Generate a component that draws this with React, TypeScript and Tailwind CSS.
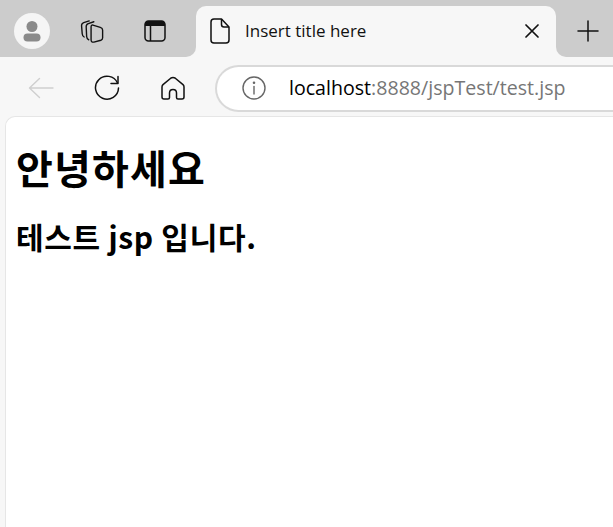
const uiFont = "font-['Open_Sans','Noto_Sans',sans-serif]";

function ProfileIcon() {
  return (
    <div className="w-9 h-9 shrink-0 rounded-full bg-[#f5f5f5] flex items-center justify-center">
      <svg width="22" height="24" viewBox="0 0 22 24" fill="#8a8a8a">
        <circle cx="11" cy="7.5" r="5.5" />
        <rect x="2.5" y="14.5" width="17" height="8" rx="4" />
      </svg>
    </div>
  );
}

function CollectionsIcon() {
  return (
    <svg className="shrink-0" width="24" height="24" viewBox="0 0 26 26" fill="none" stroke="#111111" strokeWidth="1.5" strokeLinejoin="round" strokeLinecap="round">
      <path d="M10 2 L4 4 Q1.5 5 1.7 7.5 L2.4 16 Q2.6 18.5 4.5 19.5" />
      <path d="M15 3 L9 5 Q6.6 5.8 6.7 8.5 L7.2 19 Q7.3 21.5 9.5 22.5" />
      <path d="M14 6.6 L22 9 Q24.5 9.8 24.5 12 L24.5 20.5 Q24.5 22.4 22.6 23 L15 25 Q12 25.6 12 22.6 L12 8.6 Q12 6.2 14 6.6 Z" />
    </svg>
  );
}

function TabsIcon() {
  return (
    <svg className="shrink-0" width="22" height="22" viewBox="0 0 22 22" fill="none">
      <rect x="1" y="1" width="20" height="20" rx="3.5" stroke="#111111" strokeWidth="1.5" />
      <path d="M1 4.5 Q1 1 4.5 1 L17.5 1 Q21 1 21 4.5 L21 6 L1 6 Z" fill="#111111" />
      <path d="M6.5 6 L6.5 21" stroke="#111111" strokeWidth="1.5" />
    </svg>
  );
}

function PageIcon() {
  return (
    <svg className="shrink-0" width="20" height="26" viewBox="0 0 20 26" fill="none" stroke="#111111" strokeWidth="1.5" strokeLinejoin="round">
      <path d="M4 1 L11.5 1 L19 9 L19 22 Q19 25 16 25 L4 25 Q1 25 1 22 L1 4 Q1 1 4 1 Z" />
      <path d="M11.5 1 L11.5 6.5 Q11.5 9 14 9 L19 9" />
    </svg>
  );
}

function BackIcon() {
  return (
    <svg className="shrink-0" width="26" height="22" viewBox="0 0 26 22" fill="none" stroke="#cfcfcf" strokeWidth="1.4" strokeLinecap="round" strokeLinejoin="round">
      <path d="M1.5 11 L25 11 M11.5 1.5 L1.5 11 L11.5 20.5" />
    </svg>
  );
}

function ReloadIcon() {
  return (
    <svg className="shrink-0" width="26" height="26" viewBox="0 0 26 26" fill="none" stroke="#111111" strokeWidth="1.5" strokeLinecap="round" strokeLinejoin="round">
      <path d="M23.5 8 A11.5 11.5 0 1 0 24.5 13" />
      <path d="M24 1.5 L24 8.5 L17 8.5" />
    </svg>
  );
}

function HomeIcon() {
  return (
    <svg className="shrink-0" width="24" height="24" viewBox="0 0 24 24" fill="none" stroke="#111111" strokeWidth="1.5" strokeLinejoin="round">
      <path d="M10 2 Q12 0.8 14 2 L22 8.6 Q23 9.5 23 11 L23 21 Q23 23 21 23 L17 23 Q15.5 23 15.5 21.5 L15.5 17 Q15.5 13.5 12 13.5 Q8.5 13.5 8.5 17 L8.5 21.5 Q8.5 23 7 23 L3 23 Q1 23 1 21 L1 11 Q1 9.5 2 8.6 Z" />
    </svg>
  );
}

function InfoIcon() {
  return (
    <svg className="shrink-0" width="24" height="24" viewBox="0 0 24 24" fill="none" stroke="#666666" strokeWidth="1.4" strokeLinecap="round">
      <circle cx="12" cy="12" r="11" />
      <path d="M12 10.5 L12 18" />
      <circle cx="12" cy="6.8" r="0.6" fill="#666666" />
    </svg>
  );
}

function CloseIcon() {
  return (
    <svg width="14" height="14" viewBox="0 0 14 14" stroke="#111111" strokeWidth="1.7" strokeLinecap="round">
      <path d="M1 1 L13 13 M13 1 L1 13" />
    </svg>
  );
}

function PlusIcon() {
  return (
    <svg width="22" height="22" viewBox="0 0 22 22" stroke="#111111" strokeWidth="1.5" strokeLinecap="round">
      <path d="M11 1 L11 21 M1 11 L21 11" />
    </svg>
  );
}

export default function App() {
  return (
    <div className={`w-[613px] h-[527px] overflow-hidden bg-[#f7f7f7] flex flex-col ${uiFont}`}>
      {/* Tab strip */}
      <div className="h-[57px] shrink-0 flex">
        <div className="w-[196px] bg-[#cccccc] rounded-br-[10px] flex items-center pt-1 pl-[14px]">
          <ProfileIcon />
          <div className="ml-[30px]">
            <CollectionsIcon />
          </div>
          <div className="ml-[40px]">
            <TabsIcon />
          </div>
        </div>
        <div className="w-[360px] bg-[#cccccc]">
          <div className="h-[51px] mt-[6px] bg-[#f7f7f7] rounded-t-[10px] flex items-center pl-[14px] pr-[17px] pb-[1px]">
            <PageIcon />
            <span className="ml-[15px] text-[17px] text-[#111111]">Insert title here</span>
            <div className="ml-auto">
              <CloseIcon />
            </div>
          </div>
        </div>
        <div className="flex-1 bg-[#cccccc] rounded-bl-[10px] flex items-center pt-1 pl-[21px]">
          <PlusIcon />
        </div>
      </div>

      {/* Toolbar */}
      <div className="h-[59px] shrink-0 flex items-center pl-[28px] pt-[3px]">
        <BackIcon />
        <div className="ml-[40px] shrink-0">
          <ReloadIcon />
        </div>
        <div className="ml-[41px] shrink-0">
          <HomeIcon />
        </div>
        <div className="ml-[30px] flex-1 h-[47px] bg-white border-2 border-r-0 border-[#d9d9d9] rounded-l-full flex items-center pl-[25px]">
          <InfoIcon />
          <span className="ml-[23px] text-[19.6px] whitespace-nowrap text-black">
            localhost<span className="text-[#767676]">:8888/jspTest/test.jsp</span>
          </span>
        </div>
      </div>

      {/* Page content */}
      <div className="flex-1 ml-[5px] bg-white border-t border-l border-[#e6e6e6] rounded-tl-[10px] pl-[10px] font-['Noto_Sans_CJK_KR','Noto_Sans',sans-serif] text-black">
        <h1 className="mt-[25px] text-[40px] leading-[50px] font-bold tracking-[1.2px]">안녕하세요</h1>
        <h2 className="mt-[25px] text-[30px] leading-[38px] font-bold tracking-[0.7px]">테스트 jsp 입니다.</h2>
      </div>
    </div>
  );
}
